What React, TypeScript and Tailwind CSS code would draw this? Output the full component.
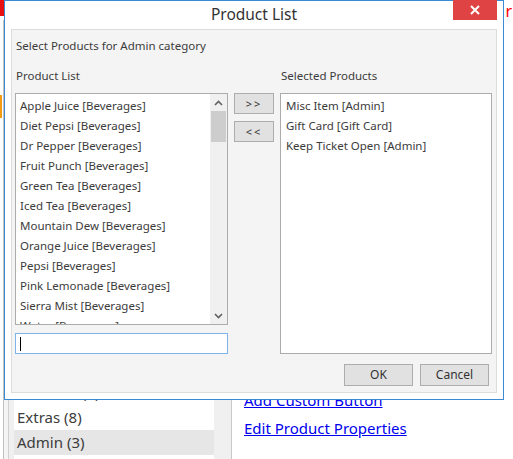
import React from "react";

const products = [
  "Apple Juice [Beverages]",
  "Diet Pepsi [Beverages]",
  "Dr Pepper [Beverages]",
  "Fruit Punch [Beverages]",
  "Green Tea [Beverages]",
  "Iced Tea [Beverages]",
  "Mountain Dew [Beverages]",
  "Orange Juice [Beverages]",
  "Pepsi [Beverages]",
  "Pink Lemonade [Beverages]",
  "Sierra Mist [Beverages]",
  "Water [Beverages]",
];

const selected = ["Misc Item [Admin]", "Gift Card [Gift Card]", "Keep Ticket Open [Admin]"];

const categories = ["Beverages (12)", "Food (24)", "Desserts (6)", "Extras (8)", "Admin (3)"];

function Chevron({ up }: { up?: boolean }) {
  return (
    <svg width="9" height="6" viewBox="0 0 9 6" className="block">
      <polyline
        points={up ? "1,5 4.5,1.5 8,5" : "1,1 4.5,4.5 8,1"}
        fill="none"
        stroke="#606060"
        strokeWidth="1.6"
      />
    </svg>
  );
}

function Background() {
  return (
    <div className="flex h-full flex-col">
      <div className="flex h-[20px] items-start justify-between">
        <div className="h-[16px] w-[4px] bg-[#e81010]" />
        <span className="mr-[1px] mt-[2px] text-[16px] leading-[18px] text-[#ff0000]">r</span>
      </div>
      <div className="flex min-h-0 flex-1">
        <div className="flex w-[232px] border-r border-[#c8c8c8]">
          <div className="flex w-[3px] flex-col">
            <div className="mt-[75px] h-[23px] w-[2px] bg-[#f39c12]" />
          </div>
          <div className="w-[1px] bg-[#c0c0c0]" />
          <div className="w-[4px] bg-[#f4f4f4]" />
          <div className="w-[1px] bg-[#d0d0d0]" />
          <div className="w-[5px] bg-[#f0f0f0]" />
          <div className="flex w-[200px] flex-col justify-end bg-white pb-[4px]">
            {categories.map((c) => (
              <div
                key={c}
                className={`h-[25px] pl-[3px] text-[15px] leading-[25px] text-[#3c3c3c] ${
                  c === "Admin (3)" ? "bg-[#e6e6e6]" : ""
                }`}
              >
                {c}
              </div>
            ))}
          </div>
          <div className="flex-1 bg-[#f0f0f0]" />
        </div>
        <div className="flex flex-1 flex-col justify-end pb-[17px] pl-[12px]">
          <a className="block h-[28px] text-[15px] leading-[28px] text-[#0000ee] underline">Add Custom Button</a>
          <a className="block h-[28px] text-[15px] leading-[28px] text-[#0000ee] underline">Edit Product Properties</a>
        </div>
      </div>
    </div>
  );
}

function Dialog() {
  return (
    <div className="absolute left-[4px] top-0 flex h-[400px] w-[500px] flex-col border border-[#3b8ad6] bg-white">
      <div className="relative flex h-[28px] shrink-0 items-center justify-center">
        <span className="mt-[-2px] text-[15.5px] leading-[20px] text-[#333]">Product List</span>
        <div className="absolute right-[6px] top-[-1px] flex h-[20px] w-[44px] items-center justify-center bg-[#e04343]">
          <svg width="10" height="10" viewBox="0 0 10 10">
            <path d="M1 1L9 9M9 1L1 9" stroke="white" strokeWidth="2" />
          </svg>
        </div>
      </div>
      <div className="mx-[6px] mb-[6px] flex flex-1 flex-col border border-[#dcdcdc] bg-[#f4f4f4] px-[3px] pt-[8px] text-[11.5px] text-[#3c3c3c]">
        <div className="pl-[1px] leading-[16px]">Select Products for Admin category</div>
        <div className="mt-[14px] grid grid-cols-[213px_40px_212px] gap-x-[6px]">
          <div className="pl-[1px] leading-[16px]">Product List</div>
          <div />
          <div className="pl-[1px] leading-[16px]">Selected Products</div>
        </div>
        <div className="mt-[9px] grid grid-cols-[213px_40px_212px] gap-x-[6px]">
          <div className="flex flex-col">
            <div className="flex h-[232px] border border-[#acacac] bg-white">
              <div className="flex-1 overflow-hidden pl-[4px] pt-[2px]">
                {products.map((p) => (
                  <div key={p} className="h-[20px] whitespace-nowrap leading-[20px]">
                    {p}
                  </div>
                ))}
              </div>
              <div className="flex w-[17px] flex-col items-center bg-[#f0f0f0]">
                <div className="flex h-[17px] items-center justify-center">
                  <Chevron up />
                </div>
                <div className="h-[31px] w-[15px] bg-[#cdcdcd]" />
                <div className="flex-1" />
                <div className="flex h-[17px] items-center justify-center">
                  <Chevron />
                </div>
              </div>
            </div>
            <div className="mt-[8px] flex h-[21px] items-center border border-[#7eb4ea] bg-white pl-[4px]">
              <div className="h-[14px] w-[1px] bg-black" />
            </div>
          </div>
          <div className="flex flex-col gap-[7px]">
            <button className="h-[21px] border border-[#adadad] bg-[#e1e1e1] text-[11px] leading-[18px] tracking-[2px] text-[#333]">
              &gt;&gt;
            </button>
            <button className="h-[21px] border border-[#adadad] bg-[#e1e1e1] text-[11px] leading-[18px] tracking-[2px] text-[#333]">
              &lt;&lt;
            </button>
          </div>
          <div className="h-[261px] border border-[#acacac] bg-white pl-[5px] pt-[2px]">
            {selected.map((s) => (
              <div key={s} className="h-[20px] whitespace-nowrap leading-[20px]">
                {s}
              </div>
            ))}
          </div>
        </div>
        <div className="mt-[10px] flex justify-end gap-[7px] pr-[4px]">
          <button className="h-[22px] w-[69px] border border-[#adadad] bg-[#e1e1e1] text-[12px] text-[#333]">OK</button>
          <button className="h-[22px] w-[69px] border border-[#adadad] bg-[#e1e1e1] text-[12px] text-[#333]">Cancel</button>
        </div>
      </div>
    </div>
  );
}

export default function App() {
  return (
    <div className="relative h-[459px] w-[513px] overflow-hidden bg-white font-['Noto_Sans',sans-serif]">
      <Background />
      <Dialog />
    </div>
  );
}
